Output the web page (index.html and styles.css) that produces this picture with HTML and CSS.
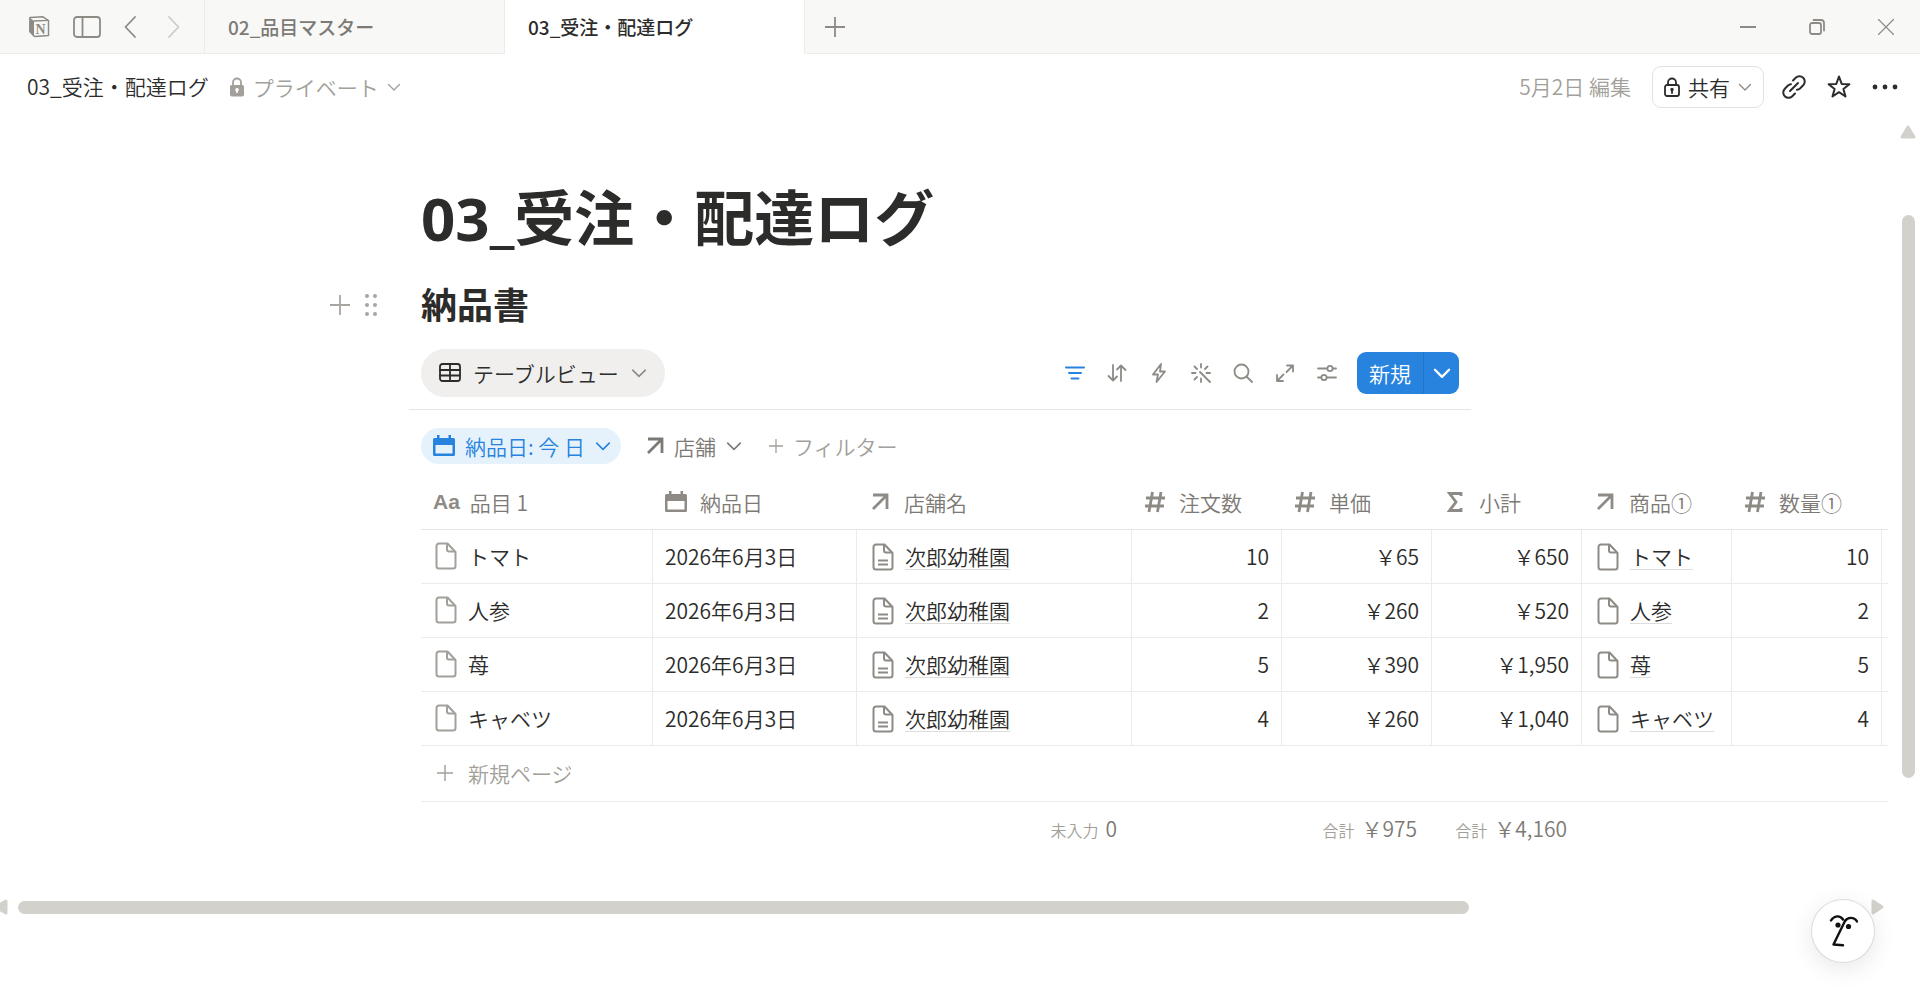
FILE: index.html
```html
<!DOCTYPE html>
<html lang="ja">
<head>
    <meta charset="UTF-8">
    <meta name="viewport" content="width=device-width, initial-scale=1.0">
    <title>03_受注・配達ログ</title>
    <link rel="stylesheet" href="styles.css">
</head>
<body>
    <!-- Shared icons -->
    <svg class="sprite" aria-hidden="true">
        <symbol id="chevron" viewBox="0 0 14 14"><path d="M1.5 4.5 7 10l5.500-5.500"/></symbol>
        <symbol id="plus" viewBox="0 0 20 20"><path d="M10 0v20M0 10h20"/></symbol>
        <symbol id="arrow" viewBox="0 0 18 18"><path d="M2 2h14v14M15.500 2.500 2 16"/></symbol>
        <symbol id="hash" viewBox="0 0 22 22"><path d="M8.500 1 5 21M17 1l-3.500 20M2 7h19M1 15h19"/></symbol>
        <symbol id="sigma" viewBox="0 0 22 22"><path d="M17 5V2.500H5.500L12 11l-6.500 8.500H17V17"/></symbol>
        <symbol id="calendar" viewBox="0 0 22 22"><path fill="currentColor" stroke="none" fill-rule="evenodd" d="M4 0h2.500v3h9V0H18v3h2.500A1.500 1.500 0 0 1 22 4.500v15a1.500 1.500 0 0 1-1.500 1.500h-19A1.500 1.500 0 0 1 0 19.500v-15A1.500 1.500 0 0 1 1.500 3H4zM2.500 10v8.500h17V10z"/></symbol>
        <symbol id="page" viewBox="0 0 22 28"><path d="M4 1.500h8.500l8 8.500V24a2.500 2.500 0 0 1-2.500 2.500H4A2.500 2.500 0 0 1 1.500 24V4A2.500 2.500 0 0 1 4 1.500z"/><path d="M12 2v5.500A2 2 0 0 0 14 9.500h6"/></symbol>
        <symbol id="page-text" viewBox="0 0 22 28"><path d="M4 1.500h8.500l8 8.500V24a2.500 2.500 0 0 1-2.500 2.500H4A2.500 2.500 0 0 1 1.500 24V4A2.500 2.500 0 0 1 4 1.500z"/><path d="M12 2v5.500A2 2 0 0 0 14 9.500h6M6 17.500h10M6 21.500h10"/></symbol>
    </svg>

    <header class="titlebar">
        <div class="window-nav">
            <button class="icon-btn" aria-label="Notion">
                <svg width="22" height="22" viewBox="0 0 22 22">
                    <path d="M2 1.500 15 .8l5.500 3.700v15L6.500 20.500 1.800 15.500z" fill="none" stroke="currentColor" stroke-width="1.500" stroke-linejoin="round"/>
                    <path d="M1.500 1.500 6 5v15.500L1.500 16z" fill="currentColor"/>
                    <path d="M5.500 5 20.500 4.300" stroke="currentColor" stroke-width="1.300"/>
                    <text x="7.500" y="17.500" class="logo-letter">N</text>
                </svg>
            </button>
            <button class="icon-btn" aria-label="サイドバー">
                <svg class="line" width="30" height="22" viewBox="0 0 30 22"><rect x="2" y="1" width="26" height="20" rx="3"/><path d="M10.500 1v20"/></svg>
            </button>
            <button class="icon-btn" aria-label="戻る">
                <svg class="line" width="12" height="22" viewBox="0 0 12 22"><path d="M11 1 1.500 11 11 21"/></svg>
            </button>
            <button class="icon-btn faded" aria-label="進む">
                <svg class="line" width="12" height="22" viewBox="0 0 12 22"><path d="m1 1 9.500 10L1 21"/></svg>
            </button>
        </div>
        <a class="tab" href="#">02_品目マスター</a>
        <a class="tab active" href="#">03_受注・配達ログ</a>
        <div class="titlebar-rest">
            <button class="icon-btn" aria-label="新しいタブ"><svg class="line" width="20" height="20"><use href="#plus"/></svg></button>
            <div class="window-controls">
                <button class="icon-btn" aria-label="最小化"><svg class="line" width="16" height="16"><path d="M0 8h16"/></svg></button>
                <button class="icon-btn" aria-label="元に戻す"><svg class="line" width="16" height="16" viewBox="0 0 16 16"><rect x="1" y="4" width="11" height="11" rx="2"/><path d="M4.500 1H12a3 3 0 0 1 3 3v7.500"/></svg></button>
                <button class="icon-btn" aria-label="閉じる"><svg class="line thin" width="16" height="16" viewBox="0 0 16 16"><path d="m0.500 0.500 15 15m0-15-15 15"/></svg></button>
            </div>
        </div>
    </header>

    <div class="topbar">
        <a class="crumb" href="#">03_受注・配達ログ</a>
        <button class="private">
            <svg width="16" height="20" viewBox="0 0 16 20"><path d="M4 9V5.500a4 4 0 0 1 8 0V9" fill="none" stroke="currentColor" stroke-width="1.800"/><path fill="currentColor" fill-rule="evenodd" d="M2.500 8h11A1.500 1.500 0 0 1 15 9.500v8a2 2 0 0 1-2 2H3a2 2 0 0 1-2-2v-8A1.500 1.500 0 0 1 2.500 8zM8 11a1.800 1.800 0 0 0-.8 3.400V16h1.600v-1.600A1.800 1.800 0 0 0 8 11z"/></svg>
            プライベート
            <svg class="line chevron" width="14" height="14"><use href="#chevron"/></svg>
        </button>
        <div class="actions">
            <span class="edited">5月2日 編集</span>
            <button class="share">
                <svg class="line" width="16" height="20" viewBox="0 0 16 20"><path d="M4 8V5.500a4 4 0 0 1 8 0V8"/><rect x="1" y="8" width="14" height="11" rx="2"/><path d="M8 12v4"/><circle cx="8" cy="12.500" r=".8"/></svg>
                共有
                <svg class="line chevron" width="14" height="14"><use href="#chevron"/></svg>
            </button>
            <button class="icon-btn dark" aria-label="リンクをコピー">
                <svg class="line" width="24" height="24" viewBox="0 0 24 24"><path d="m11 5.500 2.700-2.700a5.300 5.300 0 0 1 7.500 7.500L18 13.500a5 5 0 0 1-3 1.300M13 18.500l-2.700 2.700a5.300 5.300 0 0 1-7.500-7.500L6 10.500a5 5 0 0 1 3-1.300M8 16l8-8"/></svg>
            </button>
            <button class="icon-btn dark" aria-label="お気に入り">
                <svg class="line" width="24" height="24" viewBox="0 0 24 24"><path d="m12 1.500 2.700 7.400 7.700.3-6 4.800 2.100 7.500L12 17.200l-6.500 4.300L7.600 14l-6-4.800 7.700-.3z"/></svg>
            </button>
            <button class="icon-btn dark" aria-label="その他">
                <svg width="26" height="6" viewBox="0 0 26 6" fill="currentColor"><circle cx="3" cy="3" r="2.400"/><circle cx="13" cy="3" r="2.400"/><circle cx="23" cy="3" r="2.400"/></svg>
            </button>
        </div>
    </div>

    <main class="page">
        <h1>03_受注・配達ログ</h1>

        <div class="block-heading">
            <div class="block-handle">
                <button class="icon-btn" aria-label="追加"><svg class="line" width="20" height="20"><use href="#plus"/></svg></button>
                <button class="icon-btn" aria-label="移動"><svg width="12" height="24" viewBox="0 0 12 24" fill="currentColor"><circle cx="2" cy="3" r="2"/><circle cx="10" cy="3" r="2"/><circle cx="2" cy="12" r="2"/><circle cx="10" cy="12" r="2"/><circle cx="2" cy="21" r="2"/><circle cx="10" cy="21" r="2"/></svg></button>
            </div>
            <h2>納品書</h2>
        </div>

        <div class="db-toolbar">
            <button class="view">
                <svg class="line" width="22" height="20" viewBox="0 0 22 20"><rect x="1" y="1" width="20" height="17" rx="2.500"/><path d="M1 7h20M1 12.500h20M11 1v17"/></svg>
                テーブルビュー
                <svg class="line chevron" width="16" height="16"><use href="#chevron"/></svg>
            </button>
            <div class="tools">
                <button class="icon-btn blue" aria-label="フィルター"><svg class="line" width="20" height="20" viewBox="0 0 20 20"><path d="M1 4.500h18M4 10h12M6.500 15.500h7"/></svg></button>
                <button class="icon-btn" aria-label="並べ替え"><svg class="line" width="20" height="20" viewBox="0 0 20 20"><path d="M6 2v15.500M1.500 13 6 17.500l4-4M14 18V2.500M10 6.500l4-4L18.500 7"/></svg></button>
                <button class="icon-btn" aria-label="オートメーション"><svg class="line" width="20" height="20" viewBox="0 0 20 20"><path d="M12 1 4 11.500h5L7.500 19 16 8.500h-5z"/></svg></button>
                <button class="icon-btn" aria-label="AI"><svg class="line" width="20" height="20" viewBox="0 0 20 20"><path d="m9 9 10 10M10 1v3.500M10 15.500V19M1 10h3.500M15.500 10H19M3.500 3.500 6 6M16.500 3.500 14 6M3.500 16.500 6 14"/></svg></button>
                <button class="icon-btn" aria-label="検索"><svg class="line" width="20" height="20" viewBox="0 0 20 20"><circle cx="8.500" cy="8.500" r="7"/><path d="m13.500 13.500 5.500 5.500"/></svg></button>
                <button class="icon-btn" aria-label="全画面"><svg class="line" width="20" height="20" viewBox="0 0 20 20"><path d="M12 2.500h6v6M18 2.500l-6.500 6.500M8 18H2v-6M2 18l6.500-6.500"/></svg></button>
                <button class="icon-btn" aria-label="設定"><svg class="line" width="20" height="20" viewBox="0 0 20 20"><path d="M1 5.500h9M16 5.500h3M1 14.500h3M10 14.500h9"/><circle cx="13" cy="5.500" r="2.600"/><circle cx="7" cy="14.500" r="2.600"/></svg></button>
                <div class="new-group">
                    <button class="new">新規</button>
                    <button class="new-more" aria-label="テンプレート"><svg class="line" width="18" height="18"><use href="#chevron"/></svg></button>
                </div>
            </div>
        </div>

        <div class="filters">
            <button class="filter on"><svg class="cal" width="22" height="22"><use href="#calendar"/></svg>納品日: 今 日<svg class="line chevron" width="16" height="16"><use href="#chevron"/></svg></button>
            <button class="filter"><svg class="bold" width="18" height="18"><use href="#arrow"/></svg>店舗<svg class="line chevron" width="16" height="16"><use href="#chevron"/></svg></button>
            <button class="filter add"><svg class="line" width="14" height="14" viewBox="0 0 20 20"><use href="#plus"/></svg>フィルター</button>
        </div>

        <table class="db">
            <colgroup>
                <col class="c-title"><col class="c-date"><col class="c-store"><col class="c-std"><col class="c-std"><col class="c-std"><col class="c-std"><col class="c-std"><col>
            </colgroup>
            <thead>
                <tr>
                    <th><div class="head title"><span class="aa">Aa</span>品目 1</div></th>
                    <th><div class="head"><svg class="cal" width="22" height="22"><use href="#calendar"/></svg>納品日</div></th>
                    <th><div class="head"><svg class="bold" width="22" height="18"><use href="#arrow"/></svg>店舗名</div></th>
                    <th><div class="head"><svg class="bold" width="22" height="22"><use href="#hash"/></svg>注文数</div></th>
                    <th><div class="head"><svg class="bold" width="22" height="22"><use href="#hash"/></svg>単価</div></th>
                    <th><div class="head"><svg class="bold" width="22" height="22"><use href="#sigma"/></svg>小計</div></th>
                    <th><div class="head"><svg class="bold" width="22" height="18"><use href="#arrow"/></svg>商品①</div></th>
                    <th><div class="head"><svg class="bold" width="22" height="22"><use href="#hash"/></svg>数量①</div></th>
                    <th></th>
                </tr>
            </thead>
            <tbody>
                <tr>
                    <td><div class="item title"><svg class="doc" width="22" height="28"><use href="#page"/></svg>トマト</div></td>
                    <td>2026年6月3日</td>
                    <td><div class="item"><svg class="doc" width="22" height="28"><use href="#page-text"/></svg><a href="#">次郎幼稚園</a></div></td>
                    <td class="num">10</td>
                    <td class="num">￥65</td>
                    <td class="num">￥650</td>
                    <td><div class="item"><svg class="doc" width="22" height="28"><use href="#page"/></svg><a href="#">トマト</a></div></td>
                    <td class="num">10</td>
                    <td></td>
                </tr>
                <tr>
                    <td><div class="item title"><svg class="doc" width="22" height="28"><use href="#page"/></svg>人参</div></td>
                    <td>2026年6月3日</td>
                    <td><div class="item"><svg class="doc" width="22" height="28"><use href="#page-text"/></svg><a href="#">次郎幼稚園</a></div></td>
                    <td class="num">2</td>
                    <td class="num">￥260</td>
                    <td class="num">￥520</td>
                    <td><div class="item"><svg class="doc" width="22" height="28"><use href="#page"/></svg><a href="#">人参</a></div></td>
                    <td class="num">2</td>
                    <td></td>
                </tr>
                <tr>
                    <td><div class="item title"><svg class="doc" width="22" height="28"><use href="#page"/></svg>苺</div></td>
                    <td>2026年6月3日</td>
                    <td><div class="item"><svg class="doc" width="22" height="28"><use href="#page-text"/></svg><a href="#">次郎幼稚園</a></div></td>
                    <td class="num">5</td>
                    <td class="num">￥390</td>
                    <td class="num">￥1,950</td>
                    <td><div class="item"><svg class="doc" width="22" height="28"><use href="#page"/></svg><a href="#">苺</a></div></td>
                    <td class="num">5</td>
                    <td></td>
                </tr>
                <tr>
                    <td><div class="item title"><svg class="doc" width="22" height="28"><use href="#page"/></svg>キャベツ</div></td>
                    <td>2026年6月3日</td>
                    <td><div class="item"><svg class="doc" width="22" height="28"><use href="#page-text"/></svg><a href="#">次郎幼稚園</a></div></td>
                    <td class="num">4</td>
                    <td class="num">￥260</td>
                    <td class="num">￥1,040</td>
                    <td><div class="item"><svg class="doc" width="22" height="28"><use href="#page"/></svg><a href="#">キャベツ</a></div></td>
                    <td class="num">4</td>
                    <td></td>
                </tr>
                <tr class="new-row">
                    <td colspan="9"><button class="new-page"><svg class="line" width="16" height="16" viewBox="0 0 20 20"><use href="#plus"/></svg>新規ページ</button></td>
                </tr>
            </tbody>
            <tfoot>
                <tr>
                    <td></td>
                    <td></td>
                    <td><small>未入力</small>0</td>
                    <td></td>
                    <td><small>合計</small>￥975</td>
                    <td><small>合計</small>￥4,160</td>
                    <td></td>
                    <td></td>
                    <td></td>
                </tr>
            </tfoot>
        </table>
    </main>

    <!-- Scrollbars and assistant button float over the page -->
    <div class="vscroll">
        <svg width="16" height="14" viewBox="0 0 16 14"><path d="M8 2 14 12H2z"/></svg>
        <div class="thumb"></div>
    </div>
    <div class="hscroll">
        <svg width="8" height="16" viewBox="6 0 8 16"><path d="M2 8 12 2v12z"/></svg>
        <div class="thumb"></div>
        <svg width="14" height="16" viewBox="0 0 14 16"><path d="M12 8 3 2v12z"/></svg>
    </div>
    <button class="assistant" aria-label="Notion AI">
        <svg width="30" height="34" viewBox="0 0 30 34" fill="none" stroke="currentColor" stroke-width="2.400" stroke-linecap="round" stroke-linejoin="round"><path d="M3 6.500C6 1.500 12 .8 15 5.500M29 7.500C26 2.500 19.500 3 17 7L5.500 30.500l9.500.8"/><g fill="currentColor" stroke="none"><circle cx="10" cy="11" r="2.600"/><circle cx="20.500" cy="12.500" r="2.600"/></g></svg>
    </button>
</body>
</html>
```

FILE: styles.css
```css
* {
    box-sizing: border-box;
}
body {
    margin: 0;
    min-height: 100vh;
    position: relative;
    overflow: hidden;
    font-family: "Noto Sans CJK JP", sans-serif;
    font-size: 21px;
    font-weight: 350;
    line-height: 30px;
    color: #2c2c2b;
    background: #fff;
}
button {
    font: inherit;
    color: inherit;
    background: none;
    border: none;
    padding: 0;
    display: flex;
    align-items: center;
    white-space: nowrap;
    cursor: pointer;
}
a {
    color: inherit;
    text-decoration: none;
}
svg {
    flex: none;
    display: block;
}
.sprite {
    position: absolute;
    width: 0;
    height: 0;
}
.line {
    fill: none;
    stroke: currentColor;
    stroke-width: 1.800;
    stroke-linecap: round;
    stroke-linejoin: round;
}
.thin {
    stroke-width: 1.200;
}
.bold {
    fill: none;
    stroke: currentColor;
    stroke-width: 2.800;
}
.chevron {
    stroke-width: 1.400;
}
.icon-btn {
    color: #8e8b86;
}
.faded {
    opacity: 0.4;
}
.dark {
    color: #2c2c2b;
}
.dark .line {
    stroke-width: 2;
}
.blue {
    color: #2783de;
}
.blue .line {
    stroke-width: 2;
}

/* Title bar */
.titlebar {
    display: flex;
    height: 54px;
    background: #f8f8f7;
}
.titlebar > * {
    border-bottom: 1px solid #ecebea;
}
.window-nav {
    display: flex;
    align-items: center;
    width: 205px;
    padding-left: 28px;
    gap: 22px;
    border-right: 1px solid #ecebea;
}
.window-nav .faded {
    margin-left: 10px;
}
.logo-letter {
    font: bold 14px "Liberation Serif", serif;
    fill: currentColor;
}
.tab {
    width: 300px;
    padding-left: 23px;
    border-right: 1px solid #ecebea;
    font-size: 19px;
    font-weight: 500;
    line-height: 54px;
    color: #7d7a75;
}
.tab.active {
    background: #fff;
    border-bottom-color: #fff;
    color: #2c2c2b;
}
.titlebar-rest {
    flex: 1;
    display: flex;
    justify-content: space-between;
    align-items: center;
    padding: 0 26px 0 20px;
}
.window-controls {
    display: flex;
    gap: 53px;
}

/* Page header */
.topbar {
    display: flex;
    align-items: center;
    height: 66px;
    padding: 0 22px 0 27px;
}
.private {
    margin-left: 20px;
    gap: 8px;
    color: #a39f9a;
}
.crumb,
.edited {
    padding-bottom: 2px;
}
.actions {
    display: flex;
    align-items: center;
    gap: 21px;
    margin-left: auto;
}
.edited {
    color: #a39f9a;
}
.share {
    height: 42px;
    padding: 0 11px;
    gap: 8px;
    border: 1px solid #e3e2e0;
    border-radius: 9px;
}
.share .chevron {
    color: #8e8b86;
}
.share + .icon-btn {
    margin-left: -3px;
}

/* Page content */
.page {
    padding: 58px 32px 0 421px;
}
h1 {
    margin: 0;
    font-family: "Noto Sans", "Noto Sans CJK JP", sans-serif;
    font-size: 60px;
    line-height: 80px;
    font-weight: 700;
}
h2 {
    margin: 0;
    padding-bottom: 4px;
    font-size: 36px;
    line-height: 44px;
    font-weight: 700;
}
.block-heading {
    display: flex;
    align-items: center;
    margin: 23px 0 20px -91px;
}
.block-handle {
    display: flex;
    align-items: center;
    width: 91px;
    gap: 15px;
}
.block-handle .icon-btn {
    color: #a9a6a1;
}
.db-toolbar {
    display: flex;
    justify-content: space-between;
    max-width: 1062px;
    margin-left: -12px;
    padding: 0 12px 12px;
    border-bottom: 1px solid #e6e5e3;
}
.view {
    height: 48px;
    padding: 0 18px;
    gap: 12px;
    border-radius: 24px;
    background: #f0efed;
}
.view .chevron {
    color: #8e8b86;
}
.tools {
    display: flex;
    align-items: center;
    gap: 22px;
}
.new-group {
    display: flex;
    height: 42px;
    margin-left: -2px;
    border-radius: 9px;
    overflow: hidden;
    background: #2783de;
    color: #fff;
}
.new {
    padding: 0 12px;
    border-right: 1px solid #2474c4;
}
.new-more {
    padding: 0 8px 0 9px;
}
.filters {
    display: flex;
    padding: 18px 0 12px;
    gap: 13px;
}
.filter {
    height: 36px;
    padding: 0 10px 0 12px;
    gap: 10px;
    border-radius: 18px;
    color: #7d7a75;
}
.filter.on {
    background: #e5f2fc;
    color: #2783de;
}
.filter.add {
    padding-left: 4px;
    color: #a39f9a;
}
.cal {
    color: #8e8b86;
}
.on .cal {
    color: #2783de;
}

/* Database table */
.db {
    width: 100%;
    table-layout: fixed;
    border-spacing: 0;
}
.c-title {
    width: 232px;
}
.c-date {
    width: 204px;
}
.c-store {
    width: 275px;
}
.c-std {
    width: 150px;
}
.db th,
.db td {
    height: 54px;
    padding: 0 12px 2px;
    border-bottom: 1px solid #ecebea;
    text-align: left;
    white-space: nowrap;
}
.db tr:not(.new-row) > :last-child {
    padding: 0;
}
.db th {
    border-bottom-color: #e6e5e3;
    font-weight: 350;
    color: #7d7a75;
}
.db tbody td:not(:last-child) {
    border-right: 1px solid #ecebea;
}
.head,
.item {
    display: flex;
    align-items: center;
    gap: 13px;
}
.head .bold {
    color: #8e8b86;
}
.head.title {
    padding: 0;
    gap: 10px;
}
.item {
    padding: 2px 0 0 3px;
    gap: 11px;
}
.item.title {
    padding: 0 0 0 2px;
}
.aa {
    font: bold 21px "Liberation Sans", sans-serif;
    color: #8e8b86;
}
.doc {
    fill: none;
    stroke: #8e8b86;
    stroke-width: 2;
    stroke-linejoin: round;
}
.title .doc {
    stroke: #a39f9a;
}
.item a {
    line-height: 26px;
    border-bottom: 1px solid #deddda;
}
.db .num {
    text-align: right;
}
.db .new-row td {
    height: 56px;
}
.new-page {
    padding-left: 4px;
    gap: 15px;
    color: #a39f9a;
}
.db tfoot td {
    height: 56px;
    padding: 0 15px 2px;
    border: none;
    text-align: right;
    color: #7d7a75;
}
.db small {
    margin-right: 7px;
    font-size: 16px;
    color: #a39f9a;
}

/* Floating parts */
.thumb {
    border-radius: 7px;
    background: #d3d1cb;
}
.vscroll svg,
.hscroll svg {
    fill: #d3d1cb;
    stroke: #d3d1cb;
    stroke-width: 3;
    stroke-linejoin: round;
}
.vscroll {
    position: absolute;
    top: 125px;
    right: 4px;
    bottom: 210px;
    display: flex;
    flex-direction: column;
    align-items: center;
    gap: 76px;
}
.vscroll .thumb {
    flex: 1;
    width: 13px;
}
.hscroll {
    position: absolute;
    left: 0;
    right: 36px;
    bottom: 73px;
    display: flex;
    align-items: center;
    gap: 10px;
}
.hscroll .thumb {
    width: 77%;
    height: 13px;
    margin-right: auto;
}
.assistant {
    position: absolute;
    right: 46px;
    bottom: 26px;
    width: 62px;
    height: 62px;
    justify-content: center;
    border-radius: 50%;
    background: #fff;
    color: #111;
    box-shadow: 0 0 0 1px #dcdbd8, 0 6px 24px rgba(0, 0, 0, 0.1);
}
```
